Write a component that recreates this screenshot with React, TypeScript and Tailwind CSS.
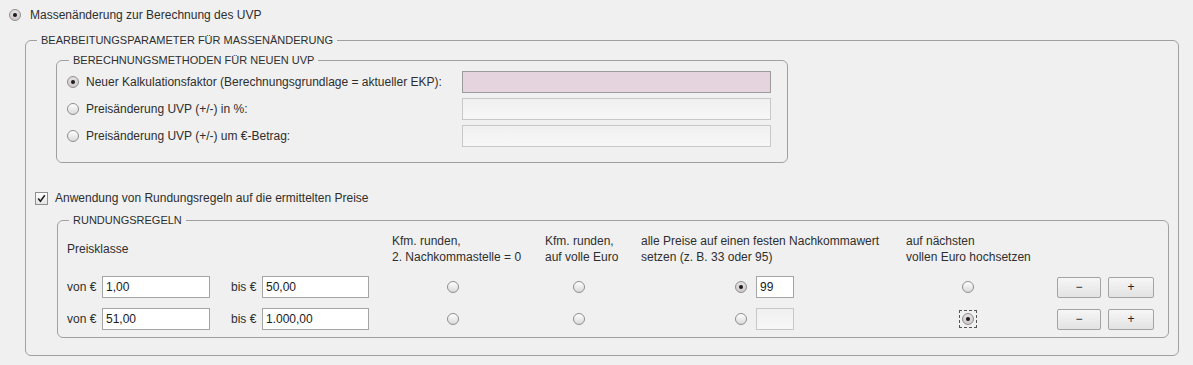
import React from "react";

function Radio({ checked = false }: { checked?: boolean }) {
  return (
    <span
      className={
        "inline-flex h-[12px] w-[12px] shrink-0 items-center justify-center rounded-full border border-[#8e8e8e] " +
        (checked ? "bg-gradient-to-b from-[#e6dfe3] to-[#cfc9cc]" : "bg-gradient-to-b from-white to-[#d9d9d9]")
      }
    >
      {checked && <span className="h-[4px] w-[4px] rounded-full bg-[#1c1c1c]" />}
    </span>
  );
}

function Checkbox() {
  return (
    <span className="inline-flex h-[13px] w-[13px] shrink-0 items-center justify-center border border-[#8e8f8f] bg-gradient-to-b from-white to-[#e4e4e4]">
      <svg width="11" height="11" viewBox="0 0 11 11">
        <path d="M2.2 5.6 L4.4 8.2 L8.8 2.2" fill="none" stroke="#1e1e1e" strokeWidth="1.5" />
      </svg>
    </span>
  );
}

function TextBox({ value = "", w, disabled = false, pink = false }: { value?: string; w: string; disabled?: boolean; pink?: boolean }) {
  const cls = pink
    ? "border-[#9c9c9c] bg-[#e5d4dd]"
    : disabled
    ? "border-[#c8c8c8] bg-gradient-to-b from-[#f0f0f0] to-[#f7f7f7]"
    : "border-[#a5a5a5] bg-white";
  return (
    <div className={"flex h-[22px] items-center border pl-[3px] text-[#1a1a1a] " + w + " " + cls}>{value}</div>
  );
}

function Btn({ label, w }: { label: string; w: string }) {
  return (
    <div className={"flex h-[21px] items-center justify-center rounded-[2px] border border-[#a3a3a3] bg-gradient-to-b from-[#f6f6f6] to-[#e3e3e3] text-[#222] " + w}>
      {label}
    </div>
  );
}

function Legend({ children }: { children: React.ReactNode }) {
  return <legend className="ml-[11px] px-[4px] text-[11px] leading-[13px] text-[#2e2e2e]">{children}</legend>;
}

export default function App() {
  const rows = [
    { von: "1,00", bis: "50,00", fix: true, mt: "mt-[11px]" },
    { von: "51,00", bis: "1.000,00", fix: false, mt: "mt-[10px]" },
  ];

  return (
    <div className="h-[365px] w-[1193px] overflow-hidden bg-[#f0f0f0] font-['Liberation_Sans',Arial,sans-serif] text-[12px] leading-[14px] text-[#2e2e2e]">
      <div className="ml-[9px] mt-[8px] flex h-[14px] items-center gap-[9px]">
        <Radio checked />
        <span>Massenänderung zur Berechnung des UVP</span>
      </div>

      <fieldset className="ml-[25px] mt-[12px] h-[322px] w-[1154px] rounded-[6px] border border-[#a0a0a0]">
        <Legend>BEARBEITUNGSPARAMETER FÜR MASSENÄNDERUNG</Legend>

        <fieldset className="ml-[30px] mt-[7px] h-[109px] w-[732px] rounded-[6px] border border-[#a0a0a0]">
          <legend className="ml-[12px] px-[4px] text-[11px] leading-[13px] text-[#2e2e2e]">BERECHNUNGSMETHODEN FÜR NEUEN UVP</legend>
          <div className="mt-[4px] flex flex-col gap-[5px] pl-[10px]">
            <div className="flex items-center">
              <div className="flex w-[395px] items-center gap-[7px]">
                <Radio checked />
                <span>Neuer Kalkulationsfaktor (Berechnungsgrundlage = aktueller EKP):</span>
              </div>
              <TextBox w="w-[309px]" pink />
            </div>
            <div className="flex items-center">
              <div className="flex w-[395px] items-center gap-[7px]">
                <Radio />
                <span>Preisänderung UVP (+/-) in %:</span>
              </div>
              <TextBox w="w-[309px]" disabled />
            </div>
            <div className="flex items-center">
              <div className="flex w-[395px] items-center gap-[7px]">
                <Radio />
                <span>Preisänderung UVP (+/-) um €-Betrag:</span>
              </div>
              <TextBox w="w-[309px]" disabled />
            </div>
          </div>
        </fieldset>

        <div className="ml-[9px] mt-[28px] flex h-[14px] items-center gap-[7px]">
          <Checkbox />
          <span>Anwendung von Rundungsregeln auf die ermittelten Preise</span>
        </div>

        <fieldset className="ml-[31px] mt-[9px] h-[124px] w-[1112px] rounded-[6px] border border-[#a0a0a0]">
          <Legend>RUNDUNGSREGELN</Legend>
          <div className="mt-[6px] grid grid-cols-[164px_161px_153px_96px_265px_151px_auto] pl-[9px] leading-[16px]">
            <div className="col-span-2 flex items-center">Preisklasse</div>
            <div>
              Kfm. runden,
              <br />
              2. Nachkommastelle = 0
            </div>
            <div>
              Kfm. runden,
              <br />
              auf volle Euro
            </div>
            <div>
              alle Preise auf einen festen Nachkommawert
              <br />
              setzen (z. B. 33 oder 95)
            </div>
            <div>
              auf nächsten
              <br />
              vollen Euro hochsetzen
            </div>
            <div />

            {rows.map((r, i) => (
              <React.Fragment key={i}>
                <div className={"flex items-center " + r.mt}>
                  <span className="w-[35px]">von €</span>
                  <TextBox value={r.von} w="w-[108px]" />
                </div>
                <div className={"flex items-center " + r.mt}>
                  <span className="w-[31px]">bis €</span>
                  <TextBox value={r.bis} w="w-[107px]" />
                </div>
                <div className={"flex items-center pl-[55px] " + r.mt}>
                  <Radio />
                </div>
                <div className={"flex items-center pl-[28px] " + r.mt}>
                  <Radio />
                </div>
                <div className={"flex items-center gap-[9px] pl-[94px] " + r.mt}>
                  <Radio checked={r.fix} />
                  <TextBox value={r.fix ? "99" : ""} w="w-[38px]" disabled={!r.fix} />
                </div>
                <div className={"flex items-center " + (r.fix ? "pl-[56px] " : "pl-[53px] ") + r.mt}>
                  {r.fix ? (
                    <Radio />
                  ) : (
                    <span className="inline-flex h-[18px] w-[18px] items-center justify-center border border-dashed border-[#555]">
                      <Radio checked />
                    </span>
                  )}
                </div>
                <div className={"flex items-center gap-[7px] " + r.mt}>
                  <Btn label="−" w="w-[44px]" />
                  <Btn label="+" w="w-[46px]" />
                </div>
              </React.Fragment>
            ))}
          </div>
        </fieldset>
      </fieldset>
    </div>
  );
}
